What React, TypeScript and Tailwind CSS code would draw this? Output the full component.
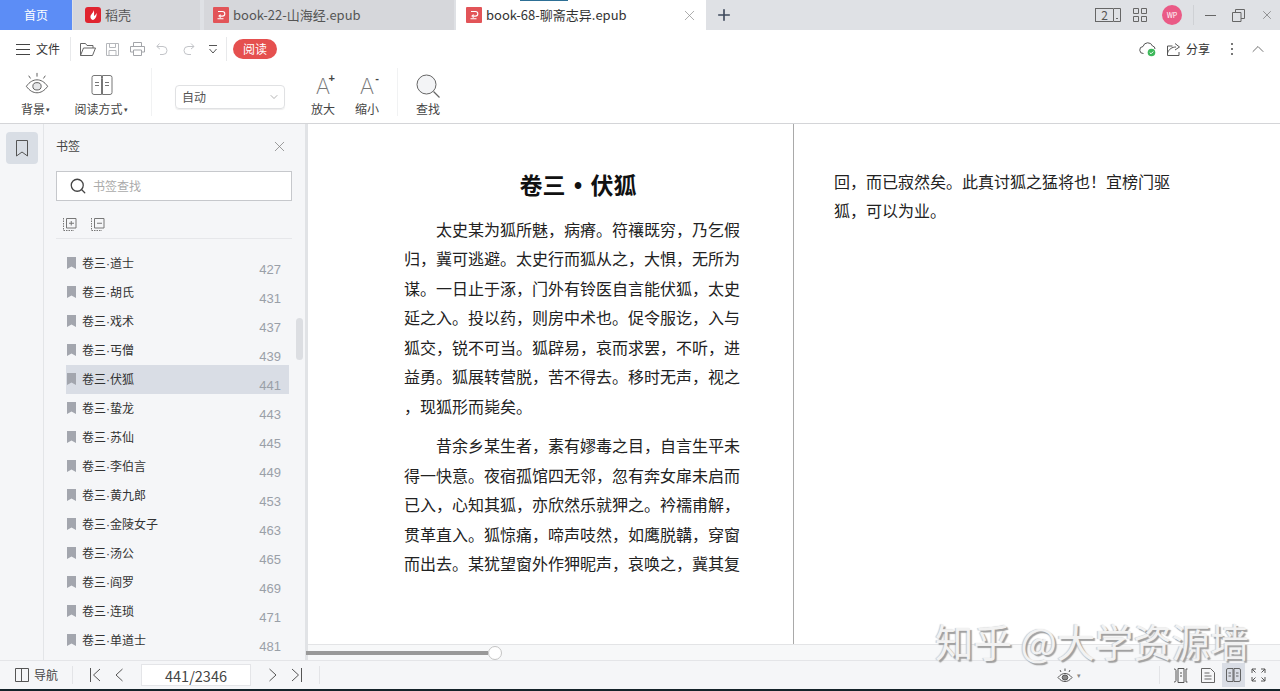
import { ChevronDown, ChevronUp, Plus, Search, X } from 'lucide-react';

const cjk = "font-['Noto_Sans_CJK_SC','Noto_Sans',sans-serif]";

const bookmarks: [string, number][] = [
  ['卷三·道士', 427],
  ['卷三·胡氏', 431],
  ['卷三·戏术', 437],
  ['卷三·丐僧', 439],
  ['卷三·伏狐', 441],
  ['卷三·蛰龙', 443],
  ['卷三·苏仙', 445],
  ['卷三·李伯言', 449],
  ['卷三·黄九郎', 453],
  ['卷三·金陵女子', 463],
  ['卷三·汤公', 465],
  ['卷三·阎罗', 469],
  ['卷三·连琐', 471],
  ['卷三·单道士', 481],
];

const para1 = [
  '太史某为狐所魅，病瘠。符禳既穷，乃乞假',
  '归，冀可逃避。太史行而狐从之，大惧，无所为',
  '谋。一日止于涿，门外有铃医自言能伏狐，太史',
  '延之入。投以药，则房中术也。促令服讫，入与',
  '狐交，锐不可当。狐辟易，哀而求罢，不听，进',
  '益勇。狐展转营脱，苦不得去。移时无声，视之',
  '，现狐形而毙矣。',
];

const para2 = [
  '昔余乡某生者，素有嫪毒之目，自言生平未',
  '得一快意。夜宿孤馆四无邻，忽有奔女扉未启而',
  '已入，心知其狐，亦欣然乐就狎之。衿襦甫解，',
  '贯革直入。狐惊痛，啼声吱然，如鹰脱韝，穿窗',
  '而出去。某犹望窗外作狎昵声，哀唤之，冀其复',
];

function PdfBadge() {
  return (
    <svg width="16" height="16" viewBox="0 0 16 16" className="shrink-0">
      <rect width="16" height="16" rx="1" fill="#e25458" />
      <path d="M5 4.5h4.5a2.2 2.2 0 0 1 0 4.6H7.2M7.6 7.6 6 9.1l1.6 1.5M4.5 11.8h6" fill="none" stroke="#fff" strokeWidth="1.1" />
    </svg>
  );
}

function Paragraph({ lines }: { lines: string[] }) {
  return (
    <div className="text-[16px] leading-[29.5px] text-[#222] whitespace-nowrap">
      {lines.map((line, i) => (
        <div key={line} className={i === 0 ? 'pl-8' : ''}>
          {line}
        </div>
      ))}
    </div>
  );
}

function TabBar() {
  return (
    <div className="flex h-[30px] shrink-0 bg-[#dfe1e5] text-[13px]">
      <div className="flex w-[72px] items-center justify-center bg-[#5c8df6] text-[12px] text-white">首页</div>
      <div className="ml-px flex w-[127px] items-center gap-[4px] bg-[#d6d7db] pl-[12px] text-[#555]">
        <svg width="16" height="16" viewBox="0 0 16 16">
          <rect width="16" height="16" rx="3" fill="#e0242f" />
          <path d="M8.5 3c.5 3-3.5 4-3 7.5.2 1.5 1.5 2.500 2.500 2.500 3-1 4-5 3.500-7-.7 1.500-1.500 2.500-2.500 3C9 7.500 9.500 5 8.500 3Z" fill="#fff" />
        </svg>
        稻壳
      </div>
      <div className="ml-[4px] flex w-[250px] items-center gap-[4px] bg-[#d6d7db] pl-[9px] text-[#555]">
        <PdfBadge />
        book-22-山海经.epub
      </div>
      <div className="relative ml-[2px] flex w-[250px] items-center gap-[4px] bg-white pl-[10px] text-[#333]">
        <div className="absolute left-[64px] top-0 h-px w-[48px] bg-[#2d6f95]" />
        <PdfBadge />
        book-68-聊斋志异.epub
        <X className="absolute right-[8px] top-[7px] text-[#8c8c8c]" size={17} strokeWidth={1} />
      </div>
      <div className="ml-[9px] flex items-center">
        <Plus size={18} strokeWidth={2.2} className="text-[#3f4a5c]" />
      </div>
      <div className="ml-auto flex items-center text-[#555]">
        <div className="flex h-[14px] w-[26px] items-stretch">
          <div className="flex w-[18px] items-center justify-center border-y border-l border-[#666] text-[12px] leading-none text-[#555]">2</div>
          <svg width="8" height="14" viewBox="0 0 8 14" fill="none" stroke="#666">
            <path d="M.5.500h7v13h-7zM3 10.500h2" />
          </svg>
        </div>
        <svg width="14" height="14" viewBox="0 0 14 14" fill="none" stroke="#666" className="ml-[12px]">
          <path d="M.5.500h5v5h-5zM8.500.500h5v5h-5zM.5 8.500h5v5h-5zM8.500 8.500h5v5h-5z" />
        </svg>
        <div className="ml-[15px] flex h-[20px] w-[20px] items-center justify-center rounded-full bg-[#ea5a86] text-[7px] text-white">WP</div>
        <div className="ml-[11px] h-[20px] w-px bg-[#cfd1d5]" />
        <svg width="11" height="11" viewBox="0 0 11 11" stroke="#666" className="ml-[11px]">
          <path d="M0 5.500h11" />
        </svg>
        <svg width="13" height="13" viewBox="0 0 13 13" fill="none" stroke="#666" className="ml-[16px]">
          <path d="M.5 3.500h8.500v9H.5zM3.500 3.500v-3h9v9H9" />
        </svg>
        <X size={14} strokeWidth={1.1} className="ml-[15px] mr-[6px] text-[#666]" />
      </div>
    </div>
  );
}

function QuickBar() {
  return (
    <div className="flex h-[38px] items-center text-[#777]">
      <svg width="14" height="11" viewBox="0 0 14 11" stroke="#444" className="ml-[16px]">
        <path d="M0 .5h14M0 5.500h14M0 10.500h14" />
      </svg>
      <span className="ml-[6px] w-[24px] text-[12px] text-[#333]">文件</span>
      <div className="ml-[10px] h-[24px] w-px bg-[#e8e9eb]" />
      <svg width="16" height="13" viewBox="0 0 16 13" fill="none" stroke="#666" className="ml-[9px]">
        <path d="M.5 12.500V.5h5l1.500 2h6v2.500M.5 12.500h12l3-7.500H3.500z" />
      </svg>
      <svg width="13" height="13" viewBox="0 0 13 13" fill="none" stroke="#b5b7bb" className="ml-[10px]">
        <path d="M.5.500h12v12H.5zM3.500.500v4h6v-4M3 12.500v-5h7v5" />
      </svg>
      <svg width="15" height="14" viewBox="0 0 15 14" fill="none" stroke="#a3a5a9" className="ml-[11px]">
        <path d="M3.500 4V.5h8V4M3.500 10H.5V4.500h14V10h-3M3.500 8h8v5.500h-8z" />
      </svg>
      <svg width="12" height="12" viewBox="0 0 12 12" fill="none" stroke="#c2c4c8" className="ml-[11px]">
        <path d="M3.500.5.800 3.500l3 2.500M1 3.500h6a4 4 0 0 1 0 8H4" />
      </svg>
      <svg width="13" height="12" viewBox="0 0 13 12" fill="none" stroke="#c2c4c8" className="ml-[14px]">
        <path d="M9 .5l3 3-3 2.500M12 3.500H6a4 4 0 0 0 0 8h3" />
      </svg>
      <svg width="10" height="9" viewBox="0 0 10 9" fill="none" stroke="#555" className="ml-[13px]">
        <path d="M1 .5h8M1.500 4l3.500 4 3.500-4" />
      </svg>
      <div className="ml-[8px] h-[24px] w-px bg-[#e8e9eb]" />
      <div className="ml-[6px] flex h-[20px] w-[44px] items-center justify-center rounded-full bg-[#e5504f] text-[12px] text-white">阅读</div>
      <div className="ml-auto flex items-center">
        <svg width="18" height="16" viewBox="0 0 18 16" fill="none" stroke="#555">
          <path d="M4.500 12.500a3.500 3.500 0 0 1-.5-7 5 5 0 0 1 9.500-.5 3 3 0 0 1 2.500 3" />
          <circle cx="12.500" cy="11.500" r="3.800" fill="#3db85a" stroke="none" />
          <path d="M10.700 11.500l1.300 1.300 2.300-2.300" stroke="#fff" />
        </svg>
        <svg width="14" height="13" viewBox="0 0 14 13" fill="none" stroke="#555" className="ml-[10px]">
          <path d="M5.500 3H.5v9.500h11.500V9M.5 10C2 6 5 4 9 4M8 .5l4.500 3.500L8 7" />
        </svg>
        <span className="ml-[5px] text-[12px] text-[#333]">分享</span>
        <div className="ml-[21px] flex flex-col gap-[3px]">
          <div className="h-[2px] w-[2px] bg-[#777]" />
          <div className="h-[2px] w-[2px] bg-[#777]" />
          <div className="h-[2px] w-[2px] bg-[#777]" />
        </div>
        <ChevronUp size={20} strokeWidth={1} className="ml-[15px] mr-[12px] text-[#555]" />
      </div>
    </div>
  );
}

function SizeGlyph({ sign }: { sign: string }) {
  return (
    <div className="relative mt-[6px] h-[22px] w-[18px] text-center font-['Inter',sans-serif] text-[22px] font-extralight leading-[24px] text-[#777]">
      A
      <span className="absolute -right-[3px] -top-[2px] font-['Liberation_Sans',sans-serif] text-[11px] font-bold leading-[12px] text-[#444]">{sign}</span>
    </div>
  );
}

function Ribbon() {
  return (
    <div className="flex h-[55px] text-[12px] text-[#444]">
      <div className="ml-[21px] flex w-[34px] flex-col items-center">
        <svg width="24" height="26" viewBox="0 0 26 26" fill="none" stroke="#555" className="-ml-[3px] mt-[3px]">
          <path d="M1.500 15.500C5 10.500 9 8.500 13 8.500s8 2 11.500 7c-3.500 5-7.500 7-11.500 7s-8-2-11.500-7Z" />
          <ellipse cx="13" cy="15.500" rx="4.500" ry="4" fill="#e6e7e9" />
          <path d="M13 1v4M4 4l2 3M22 4l-2 3" />
        </svg>
        <span className="mt-[3px] -ml-[5px] whitespace-nowrap leading-[17px]">
          背景<span className="ml-[1px] text-[7px] align-[2px]">▾</span>
        </span>
      </div>
      <div className="ml-[17px] flex w-[58px] flex-col items-center">
        <svg width="22" height="20" viewBox="0 0 22 20" fill="none" stroke="#666" className="ml-[2px] mt-[7px]">
          <path d="M10.500 3.500v16H3a2 2 0 0 1-2-2V2.500a2 2 0 0 1 2-2h7.500zM11.500 3.500v16H19a2 2 0 0 0 2-2V2.500a2 2 0 0 0-2-2h-7.500zM4 7.500h4M4 10.500h4M14 7.500h4M14 10.500h4" strokeWidth=".9" />
        </svg>
        <span className="mt-[5px] whitespace-nowrap leading-[17px]">
          阅读方式<span className="ml-[1px] text-[7px] align-[2px]">▾</span>
        </span>
      </div>
      <div className="ml-[21px] h-[48px] w-px bg-[#f1f2f3]" />
      <div className="ml-[23px] mt-[17px] flex h-[24px] w-[110px] items-center justify-between rounded-sm border border-[#e0e1e3] pl-[6px] pr-[4px] text-[#555] shadow-[0_1px_1px_#eee]">
        自动
        <ChevronDown size={12} strokeWidth={1} className="text-[#666]" />
      </div>
      <div className="ml-[26px] flex w-[24px] flex-col items-center">
        <SizeGlyph sign="+" />
        <span className="mt-[4px] whitespace-nowrap leading-[17px]">放大</span>
      </div>
      <div className="ml-[20px] flex w-[24px] flex-col items-center">
        <SizeGlyph sign="-" />
        <span className="mt-[4px] whitespace-nowrap leading-[17px]">缩小</span>
      </div>
      <div className="ml-[18px] h-[48px] w-px bg-[#f1f2f3]" />
      <div className="ml-[18px] flex w-[24px] flex-col items-center">
        <svg width="24" height="24" viewBox="0 0 24 24" fill="#f3f4f6" stroke="#666" className="mt-[6px]">
          <circle cx="10.500" cy="10.500" r="9.500" />
          <path d="M17.500 17.500 23.500 23.500" strokeWidth="1.300" />
        </svg>
        <span className="mt-[2px] whitespace-nowrap leading-[17px]">查找</span>
      </div>
    </div>
  );
}

function BookmarkPanel() {
  return (
    <div className="relative flex w-[261px] shrink-0 flex-col overflow-hidden bg-[#f5f6f8] pl-[12px]">
      <div className="flex h-[44px] shrink-0 items-center justify-between pr-[17px] text-[12px] text-[#444]">
        书签
        <X size={17} strokeWidth={1} className="text-[#777]" />
      </div>
      <div className="mt-[3px] flex h-[30px] w-[236px] shrink-0 items-center gap-[6px] border border-[#c6c8cc] bg-white pl-[12px] text-[12px] text-[#aaa]">
        <Search size={18} strokeWidth={1.7} className="text-[#444]" />
        书签查找
      </div>
      <div className="flex h-[38px] w-[236px] shrink-0 items-end gap-[14px] border-b border-[#e6e7ea] pb-[7px] pl-[7px]">
        <svg width="14" height="14" viewBox="0 0 14 14" fill="none" stroke="#777">
          <path d="M3.500 1.500h9.500v9.500H3.500zM6 6.250h5M8.250 4v4.500" />
          <path d="M.5 1v12.500H11" strokeDasharray="1.500 1" />
        </svg>
        <svg width="14" height="14" viewBox="0 0 14 14" fill="none" stroke="#777">
          <path d="M3.500 1.500h9.500v9.500H3.500zM6 6.250h5" />
          <path d="M.5 1v12.500H11" strokeDasharray="1.500 1" />
        </svg>
      </div>
      <div className="mt-[10px] flex flex-col pl-[10px] font-['Liberation_Sans','Noto_Sans_CJK_SC',sans-serif]">
        {bookmarks.map(([title, page]) => (
          <div
            key={title}
            className={`flex h-[29px] w-[223px] shrink-0 items-center pl-px pr-[8px] text-[12px] text-[#333] ${page === 441 ? 'bg-[#d9dde5]' : ''}`}
          >
            <svg width="9" height="12" viewBox="0 0 9 12" fill="#a3a6ae" className="-mt-[2px]">
              <path d="M0 0h9v12L4.500 9.500 0 12z" />
            </svg>
            <span className="ml-[6px]">{title}</span>
            <span className="ml-auto pt-[13px] text-[13px] text-[#9aa0a8]">{page}</span>
          </div>
        ))}
      </div>
      <div className="absolute left-[252px] top-[194px] h-[42px] w-[7px] rounded-full bg-[#dcdee2]" />
    </div>
  );
}

function Reader() {
  return (
    <div className="flex min-w-0 flex-1 flex-col bg-white font-['Noto_Sans_CJK_SC',serif]">
      <div className="flex min-h-0 flex-1">
        <div className="w-[486px] shrink-0 border-r border-[#a9a9a9] pl-[96px] pt-[46px]">
          <h1 className="mb-[12.500px] ml-[6px] w-[336px] text-center font-['Liberation_Sans','Noto_Sans_CJK_SC',sans-serif] text-[23px] font-bold leading-[32px] text-[#111] [word-spacing:2px]">卷三 • 伏狐</h1>
          <div className="flex flex-col gap-[10px]">
            <Paragraph lines={para1} />
            <Paragraph lines={para2} />
          </div>
        </div>
        <div className="flex-1 pl-[40px] pt-[43px] text-[16px] leading-[29px] text-[#222] whitespace-nowrap">
          <div>回，而已寂然矣。此真讨狐之猛将也！宜榜门驱</div>
          <div>狐，可以为业。</div>
        </div>
      </div>
      <div className="flex h-[16px] shrink-0 items-center border-t border-[#e3e4e6] bg-[#f7f8f9]">
        <div className="-ml-[2px] h-[4px] w-[182px] bg-[#999]" />
        <div className="h-[14px] w-[14px] rounded-full border border-[#c4c4c4] bg-white" />
      </div>
    </div>
  );
}

function Footer() {
  return (
    <div className="flex h-[29px] shrink-0 items-center border-t border-[#e4e5e8] bg-[#f5f6f8] text-[#555]">
      <svg width="14" height="14" viewBox="0 0 14 14" fill="none" stroke="#555" className="ml-[15px]">
        <path d="M.5.500h13v13H.5zM6.500.500v13" />
      </svg>
      <span className="ml-[5px] text-[12px] text-[#444]">导航</span>
      <div className="ml-[14px] h-[18px] w-px bg-[#e3e4e7]" />
      <svg width="11" height="14" viewBox="0 0 11 14" fill="none" stroke="#555" className="ml-[17px]">
        <path d="M.5 0v14M10 1 3.500 7l6.500 6" />
      </svg>
      <svg width="8" height="14" viewBox="0 0 8 14" fill="none" stroke="#555" className="ml-[14px]">
        <path d="M7.500 1 1 7l6.500 6" />
      </svg>
      <div className="ml-[18px] flex h-[22px] w-[110px] items-center justify-center border border-[#e4e5e8] bg-white pt-px text-[14.5px] text-[#444]">
        441/2346
      </div>
      <svg width="8" height="14" viewBox="0 0 8 14" fill="none" stroke="#555" className="ml-[18px]">
        <path d="M.5 1 7 7l-6.500 6" />
      </svg>
      <svg width="11" height="14" viewBox="0 0 11 14" fill="none" stroke="#555" className="ml-[14px]">
        <path d="M10.500 0v14M1 1l6.500 6L1 13" />
      </svg>
      <div className="ml-[17px] h-[18px] w-px bg-[#e3e4e7]" />
      <svg width="16" height="15" viewBox="0 0 16 15" fill="none" stroke="#555" className="ml-auto">
        <path d="M1 9.500C3.500 6.500 5.500 5.500 8 5.500s4.500 1 7 4c-2.500 3-4.500 4-7 4s-4.500-1-7-4Z" />
        <ellipse cx="8" cy="9.500" rx="2.800" ry="2.500" fill="#888" stroke="#555" />
        <path d="M8 .5v2.500M3 2l1 2M13 2l-1 2" />
      </svg>
      <span className="ml-[4px] text-[7px] text-[#888]">▾</span>
      <div className="ml-[78px] h-[18px] w-px bg-[#e3e4e7]" />
      <svg width="15" height="15" viewBox="0 0 15 15" fill="none" stroke="#555" className="ml-[13px]">
        <path d="M5 .5h6v14H5zM1 1c2 0 2 1 2 2v9c0 1 0 2-2 2M14.500 1H13v13h1.500M7 5h2M7 8h2" />
      </svg>
      <svg width="14" height="15" viewBox="0 0 14 15" fill="none" stroke="#666" className="ml-[13px]">
        <path d="M.5.500h9l4 4v10H.5zM3.500 5h5M3.500 8h7M3.500 11h7" />
      </svg>
      <div className="ml-[7px] flex h-[24px] w-[23px] items-center justify-center bg-[#d9dde5]">
        <svg width="15" height="14" viewBox="0 0 15 14" fill="none" stroke="#555">
          <path d="M7 2v11.500H2A1.500 1.500 0 0 1 .5 12V2A1.500 1.500 0 0 1 2 .5h5zM8 2v11.500h5a1.500 1.500 0 0 0 1.500-1.500V2A1.500 1.500 0 0 0 13 .5H8zM2.500 5H5M2.500 8H5M10 5h2.500M10 8h2.500" strokeWidth=".9" />
        </svg>
      </div>
      <svg width="15" height="14" viewBox="0 0 15 14" fill="none" stroke="#555" className="ml-[6px]">
        <path d="M1 5V1h4M1 1l3.500 3.500M10 1h4v4M14 1l-3.500 3.500M1 9v4h4M1 13l3.500-3.500M14 9v4h-4M14 13l-3.500-3.500" />
      </svg>
      <div className="w-[14px]" />
    </div>
  );
}

export default function App() {
  return (
    <div className={`relative flex h-[691px] w-[1280px] flex-col overflow-hidden bg-white ${cjk}`}>
      <TabBar />
      <div className="h-[94px] shrink-0 border-b border-[#d4d5d8] bg-white">
        <QuickBar />
        <Ribbon />
      </div>
      <div className="flex min-h-0 flex-1">
        <div className="w-[44px] shrink-0 border-r border-[#e3e5e8] bg-[#f5f6f8] pl-[6px] pt-[8px]">
          <div className="flex h-[32px] w-[32px] items-center justify-center rounded-sm bg-[#d9dee5]">
            <svg width="12" height="17" viewBox="0 0 12 17" fill="none" stroke="#555">
              <path d="M.5.500h11v15.500L6 12 .5 16z" />
            </svg>
          </div>
        </div>
        <BookmarkPanel />
        <div className="w-[3px] shrink-0 bg-[#e1e3e6]" />
        <Reader />
      </div>
      <Footer />
      <div className="h-[2px] shrink-0 bg-[#14232a]" />
      <div className="absolute left-[935px] top-[618px] whitespace-nowrap text-[38.400px] leading-[44px] text-[#f2f2f2] [text-shadow:2px_2px_1px_#a0a0a0,-1px_0_1px_#c8c8c8]">
        知乎 @大学资源墙
      </div>
    </div>
  );
}
